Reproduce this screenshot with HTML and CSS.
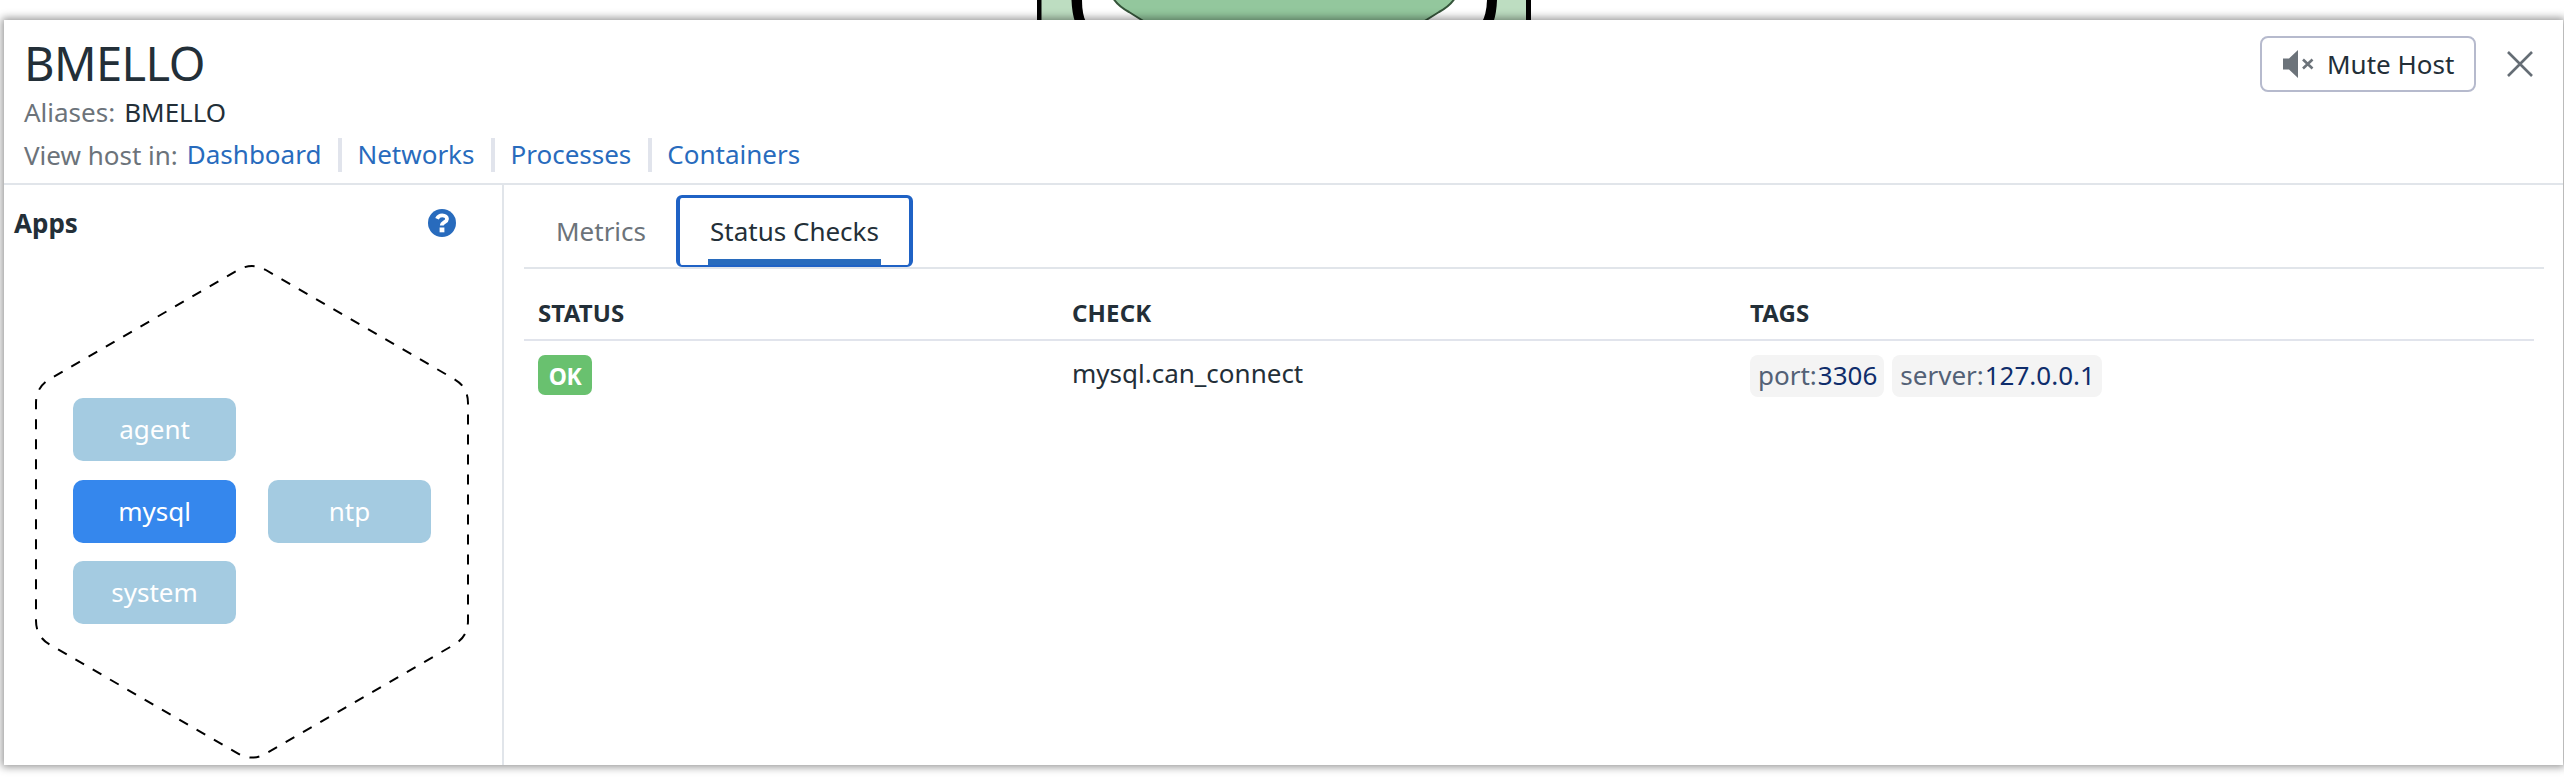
FILE: index.html
```html
<!DOCTYPE html>
<html lang="en">
<head>
<meta charset="utf-8">
<title>BMELLO</title>
<link rel="stylesheet" href="styles.css">
</head>
<body>
<svg class="hostmap" width="500" height="22" viewBox="1034 0 500 22" aria-hidden="true">
  <rect x="1037" y="0" width="494" height="22" fill="#000"/>
  <rect x="1041.5" y="0" width="484.5" height="22" fill="#bdddc1"/>
  <path d="M1071.500 0Q1072 13 1075 22H1493.500Q1496.500 13 1497 0Z" fill="#000"/>
  <path d="M1082 0Q1082 14 1086 22H1482Q1486.500 14 1487 0Z" fill="#fff"/>
  <path d="M1113 -2Q1118 6 1129 12L1145 22H1423L1439 12Q1450 6 1455 -2Z" fill="#93c79d" stroke="#35543a" stroke-width="2"/>
</svg>
<main class="panel">
  <header class="head">
    <div class="head-info">
      <h1 class="title">BMELLO</h1>
      <div class="aliases"><span class="label">Aliases:</span><span>BMELLO</span></div>
      <nav class="links"><span class="label">View host in:</span><a class="link">Dashboard</a><a class="link">Networks</a><a class="link">Processes</a><a class="link">Containers</a></nav>
    </div>
    <div class="head-actions">
      <button class="mute">
        <svg width="32" height="30" viewBox="0 0 32 30"><path d="M0 9.500H6L15 1V29L6 20.500H0Z" fill="#6c737a"/><path d="M20 10.500L29.500 19.500M29.500 10.500L20 19.500" stroke="#6c737a" stroke-width="2.600"/></svg>
        <span>Mute Host</span>
      </button>
      <svg class="close" width="26" height="26" viewBox="0 0 26 26"><path d="M1 1L25 25M25 1L1 25" stroke="#656d75" stroke-width="2.600"/></svg>
    </div>
  </header>
  <div class="content">
    <aside class="apps">
      <div class="apps-head">
        <h2 class="apps-title">Apps</h2>
        <svg width="28" height="28" viewBox="0 0 28 28"><circle cx="14" cy="14" r="14" fill="#286bbd"/><path d="M9 9.800Q10.500 6.300 14.200 6.300C17.300 6.300 19 8 19 10C19 13.300 13.800 13 13.800 16.600" fill="none" stroke="#fff" stroke-width="3.800"/><rect x="11.600" y="18.500" width="4.800" height="4.800" fill="#fff"/></svg>
      </div>
      <div class="hex">
        <svg class="hex-line" width="436" height="500" viewBox="34 262 436 500"><path d="M36 419.300V620.700Q36 636.700 49.900 644.700L238.100 753.600Q252 761.600 265.900 753.600L454.100 644.700Q468 636.700 468 620.700V403Q468 387 454.100 379L265.900 270Q252 262 238.100 270L49.900 379Q36 387 36 403V419.300" fill="none" stroke="#000" stroke-width="2" stroke-dasharray="10 10"/></svg>
        <div class="tiles">
          <div class="tile tile-start">agent</div>
          <div class="tile tile-start tile-active">mysql</div>
          <div class="tile">ntp</div>
          <div class="tile tile-start">system</div>
        </div>
      </div>
    </aside>
    <section class="detail">
      <div class="tabs">
        <div class="tab">Metrics</div>
        <div class="tab tab-active"><span class="tab-text">Status Checks</span></div>
      </div>
      <div class="table">
        <div class="row row-head"><div>STATUS</div><div>CHECK</div><div>TAGS</div></div>
        <div class="row row-body">
          <div><span class="badge">OK</span></div>
          <div class="check">mysql.can_connect</div>
          <div class="tags"><span class="tag">port:<b class="value">3306</b></span><span class="tag">server:<b class="value">127.0.0.1</b></span></div>
        </div>
      </div>
    </section>
  </div>
</main>
</body>
</html>
```
FILE: styles.css
```css
* { box-sizing: border-box; }
body {
  margin: 0;
  height: 778px;
  overflow: hidden;
  padding: 20px 0 0 4px;
  background: #fff;
  color: #232f38;
  font: 26px/36px "Noto Sans", sans-serif;
}
.hostmap { position: absolute; left: 1034px; top: 0; }
.panel {
  position: relative;
  width: 2559px;
  height: 745px;
  display: flex;
  flex-direction: column;
  background: #fff;
  box-shadow: 0 0 8px 2px rgba(0, 0, 0, .42);
}
.head {
  height: 165px;
  border-bottom: 2px solid #e1e5ea;
  display: flex;
  justify-content: space-between;
  padding: 0 30px 0 20px;
}
.title { margin: 11px 0 0; font-size: 47px; font-weight: 400; line-height: 64px; letter-spacing: -.6px; }
.aliases { display: flex; gap: 9px; margin-top: -1px; }
.label { color: #6c737a; }
.links { display: flex; align-items: center; margin-top: 8px; height: 34px; line-height: 34px; }
.links .label { margin-right: 9px; margin-top: -1px; }
.link { color: #286bbd; height: 34px; line-height: 33px; }
.link + .link { margin-left: 17px; padding-left: 15px; border-left: 4px solid #e1e4ec; }
.head-actions { display: flex; align-items: flex-start; gap: 31px; padding-top: 16px; }
.mute {
  width: 216px;
  height: 56px;
  padding: 0 0 0 21px;
  display: flex;
  align-items: center;
  gap: 12px;
  border: 2px solid #b6bacd;
  border-radius: 8px;
  background: #fff;
  color: inherit;
  font: inherit;
  white-space: nowrap;
}
.close { margin-top: 15px; }
.content { display: flex; flex: 1; }
.apps { width: 500px; border-right: 2px solid #e1e5ea; }
.apps-head { display: flex; justify-content: space-between; align-items: center; height: 36px; margin: 20px 46px 0 10px; }
.apps-title { margin: 0; font-size: 26px; font-weight: 700; line-height: 36px; }
.hex { margin: 21px 0 0 30px; width: 436px; height: 500px; display: grid; }
.hex-line { grid-area: 1 / 1; }
.tiles {
  grid-area: 1 / 1;
  display: grid;
  grid-template-columns: 163px 163px;
  grid-auto-rows: 63px;
  gap: 18.500px 32px;
  align-content: start;
  padding: 136px 0 0 39px;
}
.tile {
  border-radius: 10px;
  background: #a4cbe1;
  color: #fff;
  text-align: center;
  line-height: 62px;
}
.tile-start { grid-column: 1; }
.tile-active { background: #3587ed; }
.detail { flex: 1; padding: 10px 19px 0 20px; }
.tabs { display: flex; height: 74px; border-bottom: 2px solid #e1e5ea; }
.tab { padding: 18px 0 0; margin-left: 32px; width: 120px; height: 72px; color: #6c737a; }
.tab-active {
  display: flex;
  justify-content: center;
  margin-left: 0;
  width: 237px;
  padding: 0;
  border: 4px solid #1f62c5;
  border-width: 3px 4px 2px;
  border-radius: 6px;
  color: #232f38;
}
.tab-text { width: 173px; padding-top: 15px; height: 67px; border-bottom: 6px solid #286bbd; text-align: center; }
.table { width: 2010px; }
.row { display: grid; grid-template-columns: 534px 678px 1fr; padding-left: 14px; }
.row-head { height: 72px; border-bottom: 2px solid #e1e4ec; font-size: 24px; font-weight: 700; line-height: 87px; letter-spacing: .15px; }
.row-body { padding-top: 14px; }
.badge { display: block; width: 54px; height: 40px; border-radius: 7px; background: #69c16f; color: #fff; font-size: 23px; font-weight: 700; line-height: 42px; text-align: center; letter-spacing: -.5px; }
.check { line-height: 37px; }
.tags { display: flex; gap: 8px; }
.tag { height: 42px; line-height: 41px; padding: 0 7px 0 8px; border-radius: 8px; background: #f4f4f4; color: #536176; }
.value { margin-left: 1px; font-weight: 400; color: #0f2d6b; }
```
